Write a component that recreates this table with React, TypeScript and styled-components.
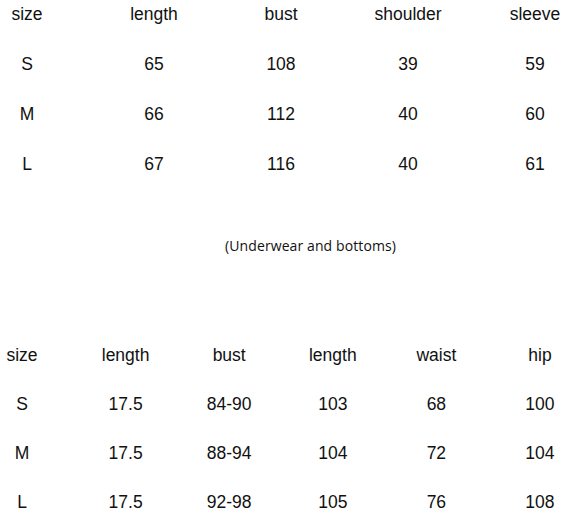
import styled, { createGlobalStyle } from "styled-components";

const GlobalStyle = createGlobalStyle`
  body {
    margin: 0;
    background: #fff;
    font-family: "Liberation Sans", Arial, sans-serif;
    color: #111;
  }
`

const Page = styled.main`
  display: flex;
  flex-direction: column;
  width: 577px;
  padding-top: 1px;
`

const Table = styled.section<{ $cols: number; $col: number; $gap: number; $rowGap: number }>`
  display: grid;
  grid-template-columns: repeat(${p => p.$cols}, ${p => p.$col}px);
  column-gap: ${p => p.$gap}px;
  row-gap: ${p => p.$rowGap}px;
`

const Cell = styled.div`
  display: flex;
  justify-content: center;
  white-space: nowrap;
  font-size: 17.5px;
  line-height: 26px;
  height: 26px;
`

const Caption = styled.p`
  margin: 59px 0 86px;
  padding-left: 44px;
  text-align: center;
  font-family: "Open Sans", "Liberation Sans", sans-serif;
  font-size: 14px;
  line-height: 20px;
  letter-spacing: 0.1px;
`

const tops = [
  ["size", "length", "bust", "shoulder", "sleeve"],
  ["S", "65", "108", "39", "59"],
  ["M", "66", "112", "40", "60"],
  ["L", "67", "116", "40", "61"],
]

const bottoms = [
  ["size", "length", "bust", "length", "waist", "hip"],
  ["S", "17.5", "84-90", "103", "68", "100"],
  ["M", "17.5", "88-94", "104", "72", "104"],
  ["L", "17.5", "92-98", "105", "76", "108"],
]

export default function App() {
    return (
        <>
            <GlobalStyle />
            <Page>
                <Table $cols={5} $col={54} $gap={73} $rowGap={24}>
                    {tops.map((row, i) => row.map((c, j) => <Cell key={`${i}-${j}`}>{c}</Cell>))}
                </Table>
                <Caption>(Underwear and bottoms)</Caption>
                <Table $cols={6} $col={44} $gap={59.6} $rowGap={23}>
                    {bottoms.map((row, i) => row.map((c, j) => <Cell key={`${i}-${j}`}>{c}</Cell>))}
                </Table>
            </Page>
        </>
    )
}
